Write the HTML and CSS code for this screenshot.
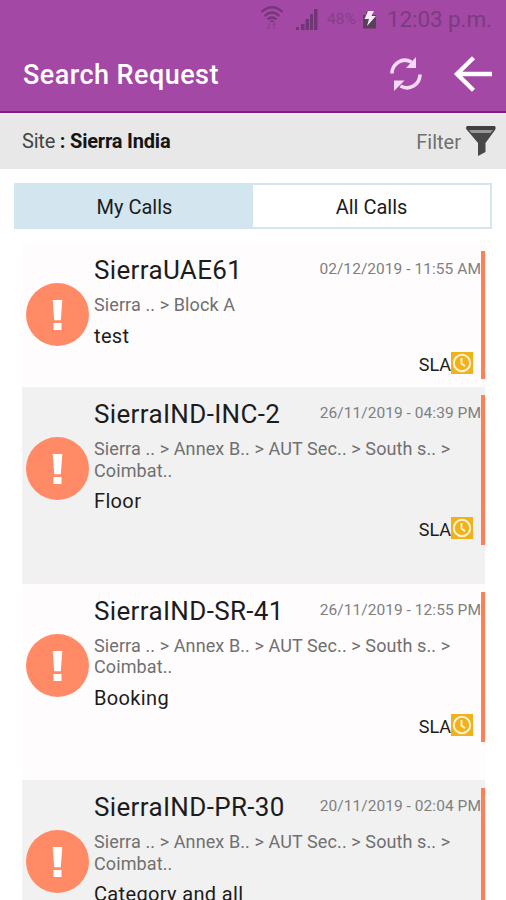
FILE: index.html
```html
<!DOCTYPE html>
<html lang="en">
<head>
<meta charset="utf-8">
<title>Search Request</title>
<link rel="stylesheet" href="styles.css">
</head>
<body>
<svg class="defs" width="0" height="0" aria-hidden="true">
  <symbol id="alert" viewBox="0 0 63 63"><circle cx="31.5" cy="31.5" r="31.5" fill="#ff8a65"/><path d="M26.7 17H36.3L34.8 37.3H28.2ZM27.5 40H35.5V47H27.5Z" fill="#fff"/></symbol>
  <symbol id="clock" viewBox="0 0 22 22"><path d="M0 0H22V22H0Z" fill="#f1b11b"/><circle cx="11" cy="11" r="8.2" fill="none" stroke="#fff3d4" stroke-width="2"/><path d="M10.5 6V11.5L14 14.2" fill="none" stroke="#fff3d4" stroke-width="1.9"/></symbol>
</svg>
<header class="top">
  <div class="status">
    <svg class="wifi" width="24" height="26" viewBox="0 0 24 26" fill="none" stroke="#74387a" stroke-width="2.2"><path d="M1.5 8Q12 -1.5 22.500 8M4.500 12Q12 5 19.500 12M7.500 15.500Q12 11.500 16.500 15.500"/><path d="M12 15.500L9.500 18H14.500Z" fill="#74387a" stroke="none"/><path d="M9 19V25M7 23L9 25M14 25V19M12 21L14 19L16 21" stroke="#8d4292" stroke-width="1.200"/></svg>
    <svg class="signal" width="22" height="22" viewBox="0 0 22 22" fill="#713675"><path d="M0 19H3V22H0ZM5 16H8.500V22H5ZM9.500 11H13V22H9.500ZM14 6H17V22H14ZM18 1H21.500V22H18Z"/></svg>
    <span class="percent">48%</span>
    <svg class="battery" width="14" height="18" viewBox="0 0 14 18"><path d="M0 4H3V1H10V4H13V17.500H0Z" fill="#584059"/><path d="M5 0H11L8.500 5H13L4 15L6 8H1.500Z" fill="#f7e9f8"/></svg>
    <span class="time">12:03 p.m.</span>
  </div>
  <div class="bar">
    <h1>Search Request</h1>
    <svg class="refresh" width="34" height="36" viewBox="0 0 34 36"><path d="M3 17.500C3 8 13 0.800 22.500 6" fill="none" stroke="#f5daf6" stroke-width="3.600"/><path d="M27 1V12H17Z" fill="#f5daf6"/><path d="M31 18.500C31 28 21 35.200 11.500 30" fill="none" stroke="#f5daf6" stroke-width="3.600"/><path d="M5 35V24.500H15.500Z" fill="#f5daf6"/></svg>
    <svg class="back" width="40" height="36" viewBox="0 0 40 36" fill="none" stroke="#fff" stroke-width="4.400"><path d="M20.500 1.800L4 18L20.500 34.200M4 18H39"/></svg>
  </div>
</header>
<div class="site">
  <div class="site-name">Site <b>: Sierra India</b></div>
  <div class="filter">Filter
    <svg width="32" height="32" viewBox="0 0 32 32"><path d="M2 5H30L20.500 18V27L13 31V18Z" fill="#484848"/><path d="M4 5H28L25.500 8H6.500Z" fill="#989898"/><path d="M2 1H30Q31.500 3 30 5H2Q0 3 2 1Z" fill="#404040"/></svg>
  </div>
</div>
<nav class="tabs"><div class="tab active">My Calls</div><div class="tab">All Calls</div></nav>
<main class="list">
  <article class="card short">
    <svg class="alert"><use href="#alert"/></svg>
    <div class="body"><div class="head"><h2>SierraUAE61</h2><time>02/12/2019 - 11:55 AM</time></div><p class="place">Sierra .. &gt; Block A</p><p class="subject">test</p><div class="sla">SLA<svg><use href="#clock"/></svg></div></div>
    <div class="stripe"></div>
  </article>
  <article class="card gray">
    <svg class="alert"><use href="#alert"/></svg>
    <div class="body"><div class="head"><h2>SierraIND-INC-2</h2><time>26/11/2019 - 04:39 PM</time></div><p class="place">Sierra .. &gt; Annex B.. &gt; AUT Sec.. &gt; South s.. &gt;<br>Coimbat..</p><p class="subject">Floor</p><div class="sla">SLA<svg><use href="#clock"/></svg></div></div>
    <div class="stripe"></div>
  </article>
  <article class="card">
    <svg class="alert"><use href="#alert"/></svg>
    <div class="body"><div class="head"><h2>SierraIND-SR-41</h2><time>26/11/2019 - 12:55 PM</time></div><p class="place">Sierra .. &gt; Annex B.. &gt; AUT Sec.. &gt; South s.. &gt;<br>Coimbat..</p><p class="subject">Booking</p><div class="sla">SLA<svg><use href="#clock"/></svg></div></div>
    <div class="stripe"></div>
  </article>
  <article class="card gray last">
    <svg class="alert"><use href="#alert"/></svg>
    <div class="body"><div class="head"><h2>SierraIND-PR-30</h2><time>20/11/2019 - 02:04 PM</time></div><p class="place">Sierra .. &gt; Annex B.. &gt; AUT Sec.. &gt; South s.. &gt;<br>Coimbat..</p><p class="subject">Category and all</p></div>
    <div class="stripe"></div>
  </article>
</main>
</body>
</html>
```

FILE: styles.css
```css
* { box-sizing: border-box; }
body { margin: 0; height: 900px; overflow: hidden; display: flex; flex-direction: column; background: #fff; color: #1c1c1c; font-family: Roboto, sans-serif; white-space: nowrap; }
svg { display: block; flex: none; }
h1, h2, p { margin: 0; }
.defs { display: none; }
.top { flex: none; height: 113px; background: #a348a5; border-bottom: 2px solid #8a168b; }
.status { height: 37px; display: flex; align-items: center; padding-right: 15px; justify-content: flex-end; color: #7b3b80; }
.wifi { margin: -4px 12px 0 0; }
.signal { margin-right: 9px; }
.percent { width: 29px; font-size: 15.5px; margin-right: 7px; color: #83408a; }
.battery { margin: 2px 10px 0 0; }
.time { width: 104px; font-size: 22.5px; letter-spacing: -0.1px; }
.bar { height: 74px; display: flex; align-items: center; padding: 0 13px 0 23px; }
h1 { flex: 1; padding-top: 2px; color: #fff; font-size: 27px; font-weight: 500; line-height: 32px; letter-spacing: 0.45px; }
.refresh { margin-right: 30px; }
.site { flex: none; height: 56px; background: #e8e8e8; border-top: 1px solid #f5eef5; display: flex; align-items: center; justify-content: space-between; padding: 0 9px 0 22px; font-size: 20px; }
.site-name { margin-top: -1px; letter-spacing: -0.2px; color: #444; }
.site-name b { font-weight: 700; color: #151515; }
.filter { display: flex; align-items: center; gap: 4px; color: #707070; }
.filter svg { margin-top: -2px; }
.tabs { flex: none; margin: 14px 14px 0; height: 46px; display: flex; border: 2px solid #d3e5ef; font-size: 20px; }
.tab { flex: 1; display: flex; align-items: center; justify-content: center; padding-top: 2px; }
.active { background: #d3e5ef; }
.list { margin: 14px 21px 0 22px; }
.card { height: 196.5px; display: flex; background: #fffcfd; }
.gray { background: #f1f1f1; }
.alert { width: 63px; height: 63px; margin: 50px 5px 0 4px; }
.body { flex: 1; padding-top: 11px; }
.head { display: flex; justify-content: space-between; height: 32px; }
h2 { font-size: 26px; font-weight: 400; line-height: 32px; letter-spacing: 0.35px; }
time { font-size: 15.5px; line-height: 30px; color: #808080; letter-spacing: 0.05px; }
.place { margin-top: 8px; font-size: 18px; line-height: 21.5px; letter-spacing: 0.1px; color: #707070; }
.subject { margin-top: 7px; font-size: 20px; line-height: 26px; letter-spacing: 0.35px; }
.sla { margin: 5px 8px 0 0; height: 22px; display: flex; justify-content: flex-end; font-size: 18px; line-height: 22px; }
.sla svg { width: 22px; height: 22px; margin-top: -2px; }
.stripe { width: 4px; height: 150px; margin-top: 8px; background: #ff8058; }
.short { height: 144px; }
.short .alert { margin-top: 40px; }
.short .stripe { height: 128px; }
.last { height: 120px; }
.last .stripe { height: 112px; }
```
